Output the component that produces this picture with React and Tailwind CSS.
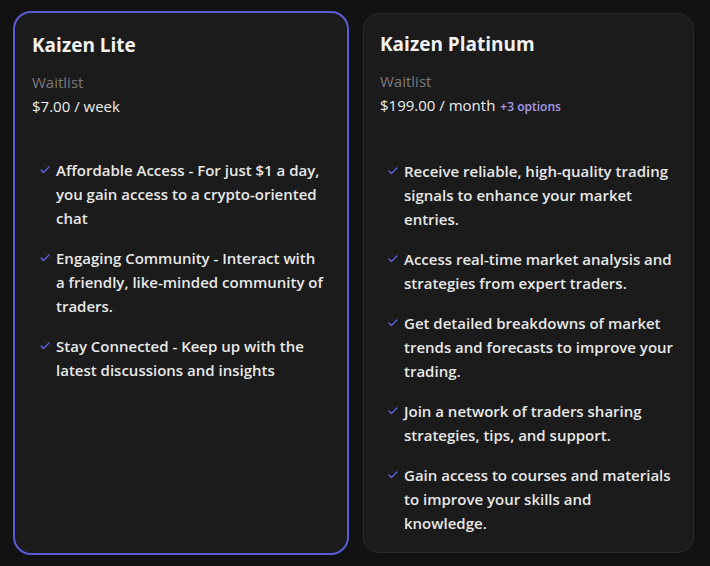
import { Check } from "lucide-react";

const plans = [
  {
    name: "Kaizen Lite",
    price: "$7.00 / week",
    selected: true,
    features: [
      "Affordable Access - For just $1 a day, you gain access to a crypto-oriented chat",
      "Engaging Community - Interact with a friendly, like-minded community of traders.",
      "Stay Connected - Keep up with the latest discussions and insights",
    ],
  },
  {
    name: "Kaizen Platinum",
    price: "$199.00 / month",
    extra: "+3 options",
    features: [
      "Receive reliable, high-quality trading signals to enhance your market entries.",
      "Access real-time market analysis and strategies from expert traders.",
      "Get detailed breakdowns of market trends and forecasts to improve your trading.",
      "Join a network of traders sharing strategies, tips, and support.",
      "Gain access to courses and materials to improve your skills and knowledge.",
    ],
  },
];

function PlanCard({ plan }) {
  return (
    <div
      className={
        plan.selected
          ? "w-[336px] shrink-0 rounded-[18px] border-2 border-[#5b5bd6] bg-[#1b1b1b] pl-[17px] pr-[24px] pt-[18px]"
          : "w-[331px] shrink-0 m-[2px] rounded-[16px] border border-[#2a2a2a] bg-[#1b1b1b] px-[16px] pt-[16px]"
      }
    >
      <h2 className="text-[19px] leading-[28px] font-bold text-[#f2f2f2]">{plan.name}</h2>
      <p className="mt-[11px] text-[15px] leading-[24px] text-[#7a7a7a]">Waitlist</p>
      <p className="text-[15px] leading-[24px] text-[#ececec]">
        {plan.price}
        {plan.extra && (
          <span className="ml-[5px] text-[12px] font-semibold text-[#a59cf0]">{plan.extra}</span>
        )}
      </p>
      <ul className="mt-[40px] flex flex-col gap-[16px] pl-[7px]">
        {plan.features.map((f) => (
          <li key={f} className="flex gap-[5px]">
            <Check className="mt-[6px] shrink-0 text-[#6262e6]" size={12} strokeWidth={2.5} />
            <span className="text-[15px] leading-[24px] font-semibold text-[#e8e8e8]">{f}</span>
          </li>
        ))}
      </ul>
    </div>
  );
}

export default function App() {
  return (
    <div
      className="flex h-screen gap-[12px] bg-[#121212] pl-[13px] pr-[14px] py-[11px]"
      style={{ fontFamily: '"Open Sans", "Noto Sans", sans-serif' }}
    >
      {plans.map((p) => (
        <PlanCard key={p.name} plan={p} />
      ))}
    </div>
  );
}
